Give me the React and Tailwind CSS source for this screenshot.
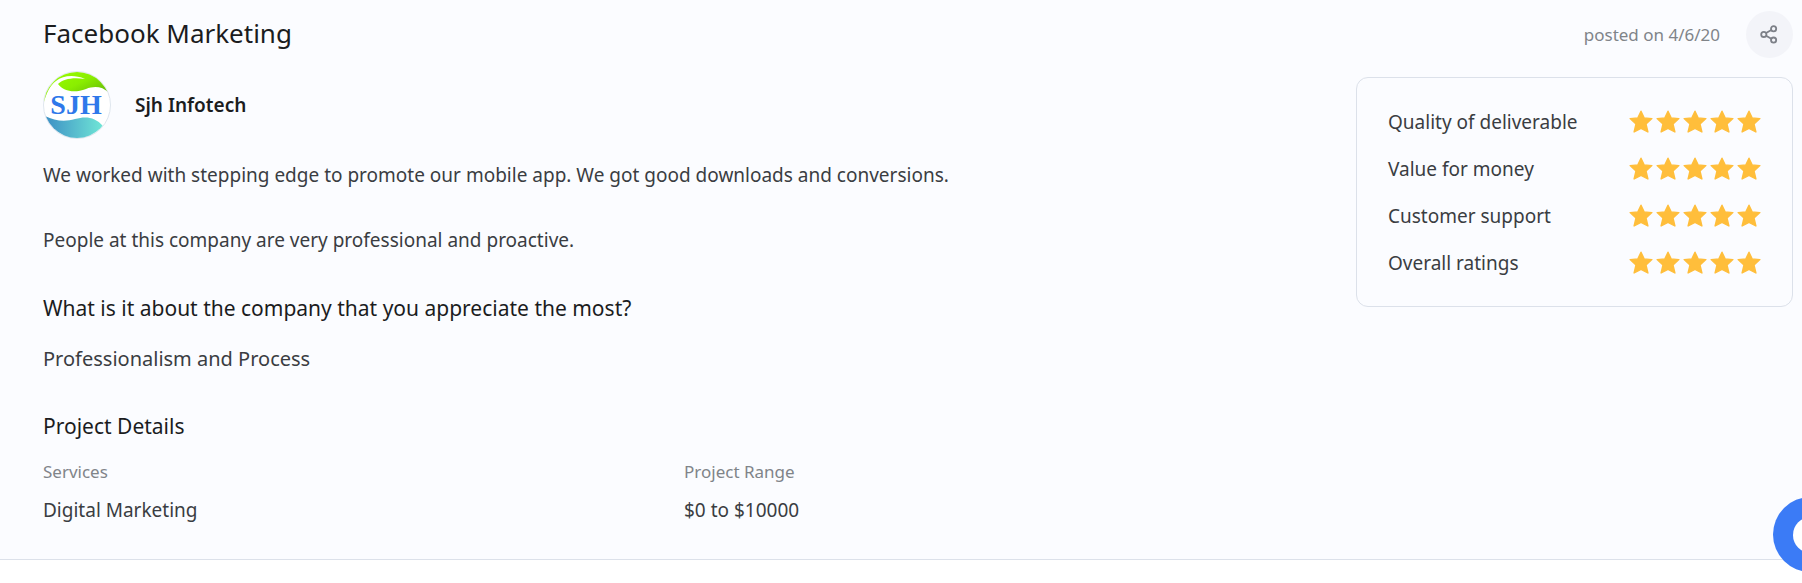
import { useState } from 'react'

const RATINGS = [
  { label: 'Quality of deliverable', score: 5 },
  { label: 'Value for money',        score: 5 },
  { label: 'Customer support',       score: 5 },
  { label: 'Overall ratings',        score: 5 },
]

const DETAILS = [
  { label: 'Services',      value: 'Digital Marketing' },
  { label: 'Project Range', value: '$0 to $10000' },
]

const Star = () => (
  <svg viewBox="0 0 24 24" className="size-6" fill="#ffbe3b" stroke="#ffbe3b" strokeWidth="1.4" strokeLinejoin="round" aria-hidden="true">
    <path d="M12 1.2 L15.1 7.9 L22.9 8.6 L17 14 L18.9 22 L12 18.3 L5.1 22 L7 14 L1.1 8.6 L8.9 7.9 Z" />
  </svg>
)

const ShareIcon = () => (
  <svg viewBox="0 0 20 20" className="size-5" fill="none" stroke="#7d8088" strokeWidth="1.8" aria-hidden="true">
    <circle cx="3.8" cy="9.4" r="2.6" />
    <circle cx="13.6" cy="3.7" r="2.6" />
    <circle cx="13.6" cy="15.1" r="2.6" />
    <path d="M6.1 8.1 L11.3 5 M6.1 10.7 L11.3 13.8" />
  </svg>
)

const CompanyLogo = () => (
  <svg viewBox="0 0 68 68" className="size-[68px]" role="img" aria-label="SJH">
    <defs>
      <clipPath id="logo-clip"><circle cx="34" cy="34" r="33" /></clipPath>
      <linearGradient id="leaf" x1="0" y1="0" x2="1" y2="1">
        <stop offset="0" stopColor="#9cff00" />
        <stop offset="0.45" stopColor="#8aee00" />
        <stop offset="1" stopColor="#4f9a10" />
      </linearGradient>
      <linearGradient id="wave" x1="0" y1="0" x2="1" y2="0">
        <stop offset="0" stopColor="#3b8cc4" />
        <stop offset="1" stopColor="#70e6d6" />
      </linearGradient>
    </defs>
    <circle cx="34" cy="34" r="33.5" fill="#fff" stroke="#dfe6ee" />
    <g clipPath="url(#logo-clip)">
      <path d="M0 34 C2 12 16 0 34 0 C52 0 62 12 66 22 C59 15 51 15 43 18 C32 22 21 21 15 13 C20 8 30 6 42 8 C30 3 20 5 13 10 C6 15 3 24 0 34 Z" fill="url(#leaf)" />
      <path d="M2 45 C12 50 22 51 32 48 C43 45 52 46 60 55 L60 68 L0 68 Z" fill="url(#wave)" />
    </g>
    <text x="33" y="43" textAnchor="middle" fontFamily="Liberation Serif, serif" fontWeight="700" fontSize="28" fill="#2e78ea">SJH</text>
  </svg>
)

function RatingCard() {
  return (
    <aside className="flex w-[437px] shrink-0 flex-col gap-[19px] rounded-xl border border-[#dce1ea] px-[31px] pt-[30px] pb-[29px]">
      {RATINGS.map(r => (
        <div key={r.label} className="flex items-center justify-between">
          <span className="text-[19px] leading-7 text-[#3a3d42]">{r.label}</span>
          <div className="flex gap-[3px]" role="img" aria-label={`${r.score} / 5`}>
            {Array.from({ length: r.score }, (_, i) => <Star key={i} />)}
          </div>
        </div>
      ))}
    </aside>
  )
}

export default function App() {
  const [chatOpen, setChatOpen] = useState(false)

  return (
    <div className="min-h-screen overflow-hidden bg-white font-['Noto_Sans','Open_Sans',sans-serif]">
      <article className="border-b border-[#dce1ea] bg-[#fbfcff] pt-[11px] pr-[9px] pb-8 pl-[43px]">

        <header className="flex items-start justify-between">
          <h2 className="text-[26px] leading-[44px] text-[#1b1c1e]">Facebook Marketing</h2>
          <div className="flex items-center gap-[26px]">
            <span className="text-[17px] text-[#808489]">posted on 4/6/20</span>
            <button type="button" aria-label="Share" className="flex size-[47px] items-center justify-center rounded-full bg-[#f3f4f9]">
              <ShareIcon />
            </button>
          </div>
        </header>

        <div className="flex gap-[31px]">
          <div className="min-w-0 flex-1 pt-[13px]">
            <div className="flex items-center gap-6">
              <CompanyLogo />
              <h3 className="text-[19px] font-semibold text-[#1b1c1e]">Sjh Infotech</h3>
            </div>

            <p className="mt-5 text-[19px] leading-[33px] text-[#3a3d42]">
              We worked with stepping edge to promote our mobile app. We got good downloads and conversions.
            </p>
            <p className="mt-8 text-[19px] leading-[33px] text-[#3a3d42]">
              People at this company are very professional and proactive.
            </p>

            <h4 className="mt-[35px] text-[21px] leading-8 text-[#1b1c1e]">What is it about the company that you appreciate the most?</h4>
            <p className="mt-[18px] text-[20px] leading-[33px] text-[#3a3d42]">Professionalism and Process</p>

            <h4 className="mt-[35px] text-[21px] leading-8 text-[#1b1c1e]">Project Details</h4>
            <dl className="mt-4 grid grid-cols-2">
              {DETAILS.map(d => (
                <div key={d.label}>
                  <dt className="text-[17px] leading-7 text-[#808489]">{d.label}</dt>
                  <dd className="mt-2 text-[19px] leading-[33px] text-[#3a3d42]">{d.value}</dd>
                </div>
              ))}
            </dl>
          </div>

          <div className="pt-[19px]">
            <RatingCard />
          </div>
        </div>
      </article>

      {/* Chat launcher, half off the right edge */}
      <button
        type="button"
        aria-label="Chat"
        aria-pressed={chatOpen}
        onClick={() => setChatOpen(!chatOpen)}
        className="fixed -right-[46px] bottom-[11px] flex size-[75px] items-center justify-center rounded-full bg-[#3b7bf6]"
      >
        <span className="size-[36px] rounded-full bg-white" />
      </button>
    </div>
  )
}
